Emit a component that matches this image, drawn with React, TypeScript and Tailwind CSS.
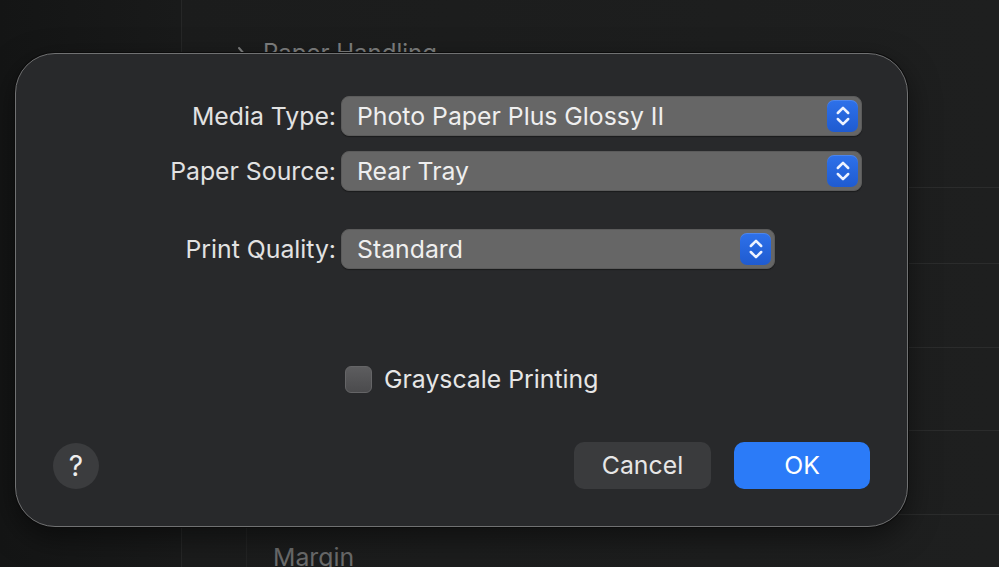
import React from "react";

const font = { fontFamily: "Inter, 'Noto Sans', 'Liberation Sans', sans-serif" };

function Stepper() {
  return (
    <div className="flex h-[32px] w-[31px] items-center justify-center rounded-[7px] bg-gradient-to-b from-[#2e71ea] to-[#1f5bd0] shadow-[inset_0_1px_0_rgba(255,255,255,0.15)]">
      <svg width="16" height="24" viewBox="0 0 16 24" fill="none" stroke="#eef3ff" strokeWidth="2.5" strokeLinecap="round" strokeLinejoin="round">
        <path d="M2.8 9 L8 3.8 L13.2 9" />
        <path d="M2.8 15 L8 20.2 L13.2 15" />
      </svg>
    </div>
  );
}

function Select({ value, width }: { value: string; width: string }) {
  return (
    <div
      className={`flex h-[40px] ${width} items-center justify-between rounded-[8px] border border-[#5b5b5b] bg-[#666666] pl-[15px] pr-[3px] shadow-[0_1px_1px_rgba(0,0,0,0.35)]`}
    >
      <span className="text-[24.8px] leading-none text-[#efefef]">{value}</span>
      <Stepper />
    </div>
  );
}

function Label({ children }: { children: React.ReactNode }) {
  return (
    <div className="flex h-[40px] items-center justify-end text-[24.8px] leading-none text-[#e2e2e2]">
      {children}
    </div>
  );
}

export default function App() {
  return (
    <div className="relative h-[567px] w-[999px] overflow-hidden bg-[#1a1b1b]" style={font}>
      {/* window behind the sheet */}
      <div className="flex h-full w-full">
        <div className="h-full w-[182px] border-r border-[#262727] bg-gradient-to-r from-[#141515] to-[#191a1a]" />
        <div className="flex flex-1 flex-col bg-gradient-to-r from-[#1b1c1c] to-[#1e1f1f]">
          <div className="flex items-start gap-[16px] pl-[55px] pt-[41px] text-[24px] leading-none text-[#7f8080]">
            <svg width="10" height="18" viewBox="0 0 10 18" fill="none" stroke="#7f8080" strokeWidth="2" strokeLinecap="round" strokeLinejoin="round" className="mt-[5px]">
              <path d="M2 2 L8 9 L2 16" />
            </svg>
            <span>Paper Handling</span>
          </div>
          <div className="ml-[64px] mt-[122px] flex flex-1 flex-col border-l border-[#232424]">
            <div className="h-[77px] border-t border-b border-[#2b2c2c]" />
            <div className="h-[84px] border-b border-[#2b2c2c]" />
            <div className="h-[83px] border-b border-[#2b2c2c]" />
            <div className="h-[84px] border-b border-[#2b2c2c]" />
            <div className="flex-1 pl-[26px] pt-[30px] text-[24.8px] leading-none text-[#6c6d6d]">Margin</div>
          </div>
        </div>
      </div>

      {/* print options sheet */}
      <div className="absolute left-[15px] top-[53px] flex h-[474px] w-[893px] flex-col rounded-[40px] border-[1.5px] border-[#707172] bg-[#28292b] shadow-[0_0_0_1px_#0c0c0c,0_10px_30px_rgba(0,0,0,0.5)]">
        <div className="grid grid-cols-[320px_auto] gap-x-[5px] pt-[42px]">
          <Label>Media Type:</Label>
          <Select value="Photo Paper Plus Glossy II" width="w-[521px]" />
          <div className="col-span-2 h-[15px]" />
          <Label>Paper Source:</Label>
          <Select value="Rear Tray" width="w-[521px]" />
          <div className="col-span-2 h-[38px]" />
          <Label>Print Quality:</Label>
          <Select value="Standard" width="w-[434px]" />
        </div>

        <div className="ml-[329px] mt-[97px] flex items-center gap-[12px]">
          <div className="h-[27px] w-[27px] rounded-[6px] border border-[#656567] bg-gradient-to-b from-[#5d5d5f] to-[#4b4b4d]" />
          <span className="text-[24.8px] leading-none text-[#e6e6e6]">Grayscale Printing</span>
        </div>

        <div className="mt-[49px] flex items-center pl-[37px] pr-[37px]">
          <div className="flex h-[46px] w-[46px] items-center justify-center rounded-full bg-[#3b3c3e] text-[28px] leading-none text-[#eeeeee]">
            ?
          </div>
          <div className="flex-1" />
          <button className="flex h-[47px] w-[137px] items-center justify-center rounded-[10px] bg-[#3a3b3d] text-[24.8px] leading-none text-[#e6e6e6]">
            Cancel
          </button>
          <button className="ml-[23px] flex h-[47px] w-[136px] items-center justify-center rounded-[10px] bg-[#2b7bf8] text-[24.8px] leading-none text-white">
            OK
          </button>
        </div>
      </div>
    </div>
  );
}
